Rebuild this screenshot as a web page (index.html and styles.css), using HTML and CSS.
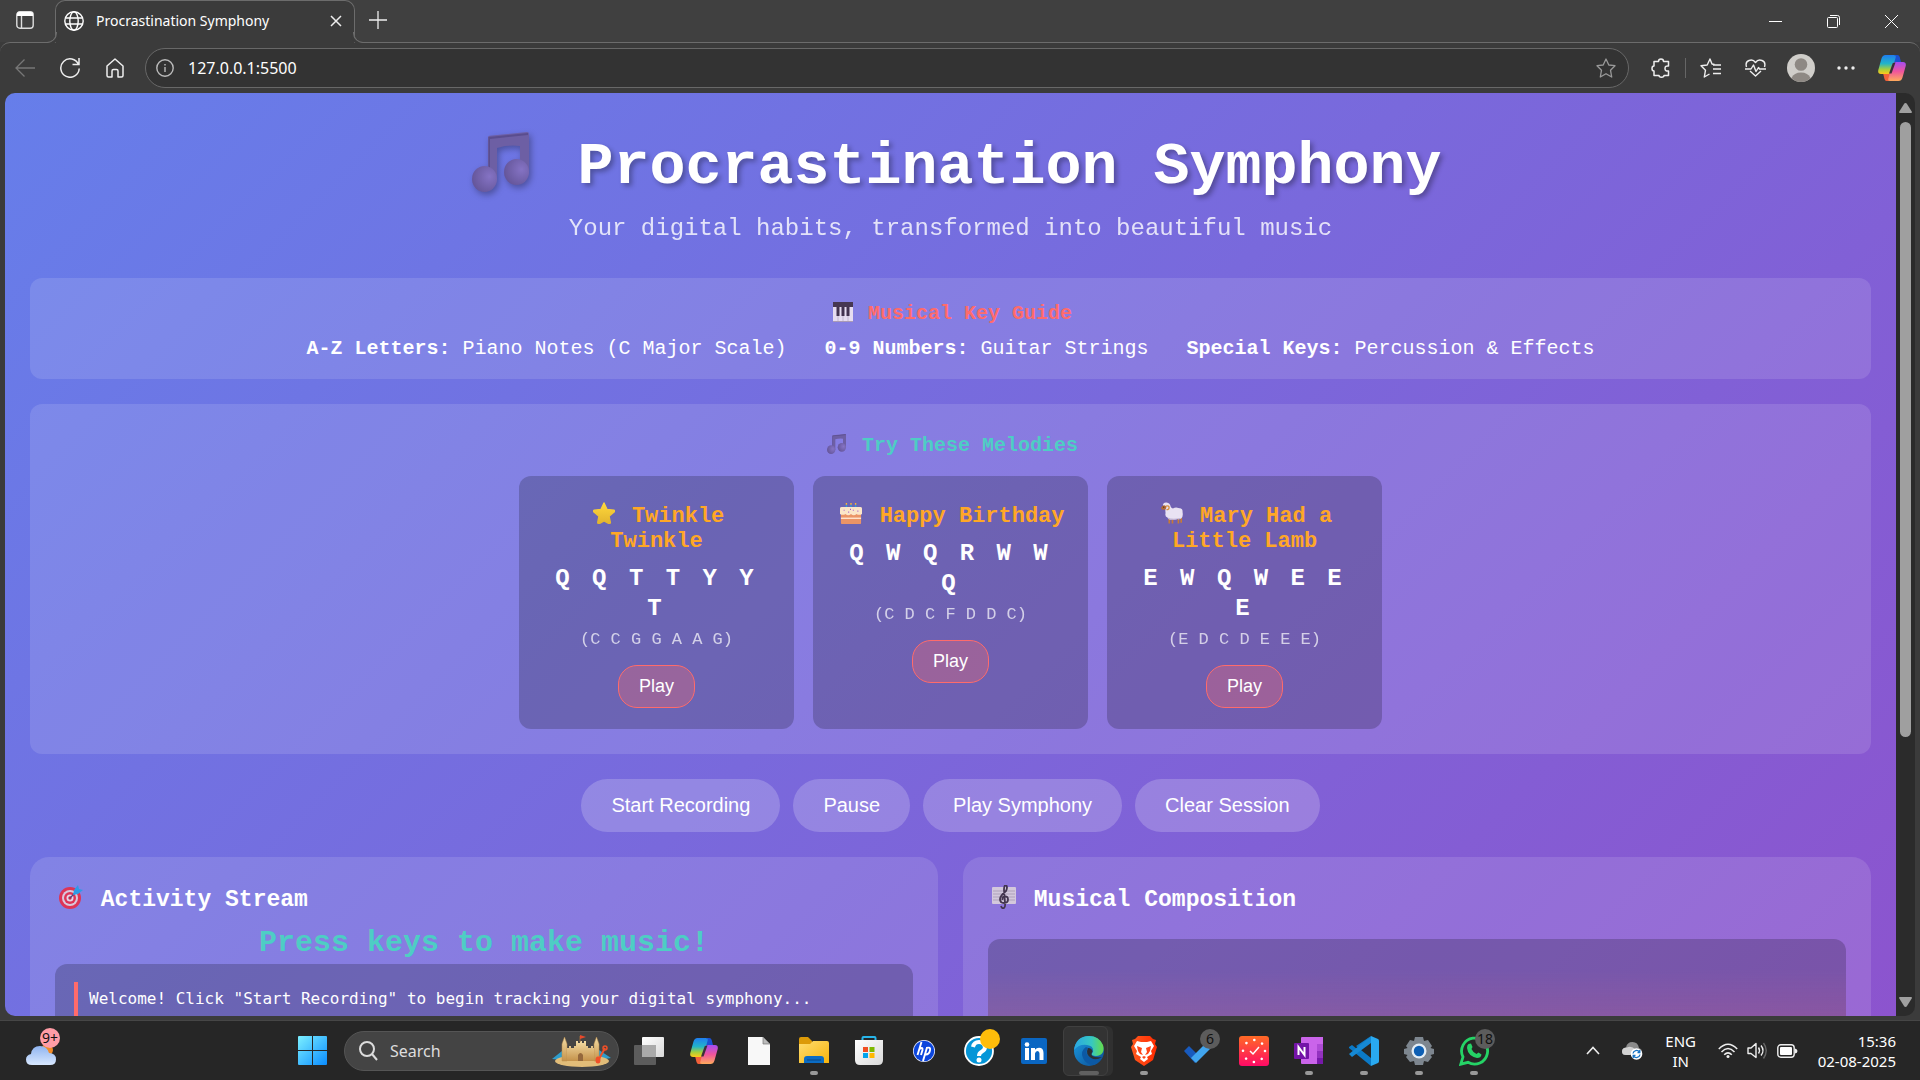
FILE: index.html
```html
<!DOCTYPE html>
<html lang="en">
<head>
<meta charset="utf-8">
<title>Procrastination Symphony</title>
<link rel="stylesheet" href="styles.css">
</head>
<body>
<svg class="sprite" aria-hidden="true">
  <defs>
    <radialGradient id="noteBall" cx=".7" cy=".4" r=".7"><stop offset="0" stop-color="#8573c4"/><stop offset="1" stop-color="#65569a"/></radialGradient>
    <linearGradient id="starFill" x2="0" y2="1"><stop offset="0" stop-color="#ffd83c"/><stop offset="1" stop-color="#e2b42e"/></linearGradient>
    <linearGradient id="cpA" x2="0" y2="1"><stop offset="0" stop-color="#1f7df0"/><stop offset=".45" stop-color="#22b4c8"/><stop offset=".75" stop-color="#a6cf3c"/><stop offset="1" stop-color="#ffc91a"/></linearGradient>
    <linearGradient id="cpB" x2="0" y2="1"><stop offset="0" stop-color="#a44cf2"/><stop offset=".5" stop-color="#f0559c"/><stop offset="1" stop-color="#ffab5c"/></linearGradient>
    <linearGradient id="winFill" x2="1" y2="1"><stop offset="0" stop-color="#7cf0ff"/><stop offset="1" stop-color="#0a8cff"/></linearGradient>
    <linearGradient id="cloudFill" x2="0" y2="1"><stop offset="0" stop-color="#8fb4f0"/><stop offset="1" stop-color="#d8e8ff"/></linearGradient>
    <linearGradient id="sand" x2="0" y2="1"><stop offset="0" stop-color="#f3dca4"/><stop offset="1" stop-color="#c4924a"/></linearGradient>
    <linearGradient id="folderFill" x2="1" y2="1"><stop offset="0" stop-color="#ffdd70"/><stop offset="1" stop-color="#f7b40c"/></linearGradient>
    <linearGradient id="edgeTop" x2="1"><stop offset="0" stop-color="#2aa6e4"/><stop offset=".6" stop-color="#37c8c0"/><stop offset="1" stop-color="#66dc48"/></linearGradient>
    <linearGradient id="edgeLow" x2="1" y2="1"><stop offset="0" stop-color="#1b9de2"/><stop offset="1" stop-color="#0c4a92"/></linearGradient>
    <linearGradient id="braveFill" x2="1"><stop offset="0" stop-color="#ff5a1f"/><stop offset="1" stop-color="#ff2a00"/></linearGradient>
    <linearGradient id="clockFill" x2="0" y2="1"><stop offset="0" stop-color="#ff6a25"/><stop offset="1" stop-color="#ff0a66"/></linearGradient>
    <linearGradient id="paperFill" x2="1" y2="1"><stop offset="0" stop-color="#fff"/><stop offset="1" stop-color="#d9d9d9"/></linearGradient>
  </defs>
  <symbol id="notes" viewBox="0 0 60 60">
    <path d="M16 5.500Q16 4 17.500 3.800L55 0Q57 0 57 2V42H48V14Q36 12.500 25 16V48H16Z" fill="#6d5fa4"/>
    <path d="M16.500 5L56 1V3L18 7V46H16.500Z" fill="#5a4d8e"/>
    <ellipse cx="12.500" cy="47" rx="12.500" ry="13" fill="url(#noteBall)"/>
    <ellipse cx="44.500" cy="40" rx="12.500" ry="13" fill="url(#noteBall)"/>
  </symbol>
  <symbol id="piano" viewBox="0 0 20 20">
    <path d="M0 0H20V20H0Z" fill="#e6dcf0"/><path d="M0 0H20V5H0Z" fill="#473752"/><path d="M3.500 5H6.500V14H3.500ZM8.500 5H11.500V14H8.500ZM13.500 5H16.500V14H13.500Z" fill="#42324e"/><path d="M5 14V19M10 14V19M15 14V19" stroke="#b9aec6" stroke-width=".8"/><path d="M0 19.500H20" stroke="#a99bb5"/>
  </symbol>
  <symbol id="star" viewBox="0 0 24 24">
    <path d="M12 1L15.200 8L23 9Q24 10 23 11L17.500 15.500L19 22.500Q18.500 24 17 23.300L12 20.500L7 23.500Q5 24 5.200 22L6.500 15.500L1 11Q0 9.500 1.500 9L8.800 8Z" fill="url(#starFill)" stroke="url(#starFill)" stroke-width="1.500" stroke-linejoin="round"/>
  </symbol>
  <symbol id="cake" viewBox="0 0 24 24">
    <path d="M7 3V7M12 3V7M17 3V7" stroke="#2f9ed8" stroke-width="1.500"/><path d="M7 1V3M12 1V3M17 1V3" stroke="#ffb52e" stroke-width="1.500"/>
    <rect x="1" y="12" width="22" height="12" rx="1" fill="#eb9466"/><path d="M1 17H23V18.500H1Z" fill="#ffe5cf"/>
    <path d="M0 7Q0 5.500 2 5.500H22Q24 5.500 24 7V13Q21 15 18 13Q15 16 12 13Q9 16 6 13Q3 15 0 13Z" fill="#fbe6c9"/>
    <path d="M4 9h1M9 11h1M14 9h1M19 10h1M11 8h1" stroke="#a250c8" stroke-width="1.300"/>
  </symbol>
  <symbol id="sheep" viewBox="0 0 24 24">
    <path d="M9 18V23.500M12.500 19V23.500M19 18V23.500M22 17V22.500" stroke="#c87a35" stroke-width="1.800"/>
    <path d="M2 3Q3 0 6 .5Q10 1 10.500 5Q11 7 13 7Q16 5.500 19 6.500Q24 6.500 23.500 11Q24.500 16 22 18Q20 19.500 18 18.500Q15 20 12 19Q8 20 7 17Q4 16 5 12Q4.500 9 5 7Z" fill="#e9e2f3"/>
    <path d="M7 17Q12 19.500 22 17.500Q20 19.500 18 18.500Q15 20 12 19Q8 20 7 17Z" fill="#bdaed0"/>
    <path d="M0 6.500Q1 3.500 4 3.500L6 5Q5.500 8.500 3.500 8.500L1 8.300Z" fill="#b46a34"/><path d="M5.500 4.500Q9 3.500 8.800 6.500Q8 9 6 8" fill="none" stroke="#d9913f" stroke-width="1.500"/><circle cx="3" cy="5.500" r=".7" fill="#222"/>
  </symbol>
  <symbol id="target" viewBox="0 0 24 24">
    <circle cx="11" cy="13" r="11" fill="#dd3556"/><circle cx="11" cy="13" r="8" fill="#d9c8dc"/><circle cx="11" cy="13" r="6" fill="#dd3556"/><circle cx="11" cy="13" r="3.500" fill="#e4d6e8"/><circle cx="11" cy="13" r="1.700" fill="#c82b4c"/>
    <path d="M11 13L19 5" stroke="#5a4080" stroke-width="1.300"/><path d="M14 10L15 5L19 0L20 4L24 5L19 9Z" fill="#2e9be6"/>
  </symbol>
  <symbol id="score" viewBox="0 0 24 24">
    <rect y="2" width="24" height="17" rx="1" fill="#d3c8dc"/><path d="M1 6H23M1 9H23M1 12H23M1 15H23" stroke="#a99db6" stroke-width=".9"/>
    <path d="M9 21Q10 24 12 23Q13.500 22 13 18L12 5Q12 0 14 0Q16 2 14 6Q8 11 8 14Q8 18 12 18Q16 18 16 14.500Q16 11 12.500 11.500Q10 12 10.500 15" fill="none" stroke="#43354e" stroke-width="1.800"/>
  </symbol>
  <symbol id="copilot" viewBox="0 0 28 26">
    <path d="M17 0H19.500Q21 0 21.700 2L23 7H17L14 10Z" fill="#1b50d0"/>
    <path d="M11 26H8.500Q7 26 6.500 24L5 18H11L14 15Z" fill="#f2603a"/>
    <path d="M7.500 0H16Q18.500 0 17.500 3L14 15.500Q13 19 10 19H3Q-.5 19 .3 15L3.500 3.500Q4.500 0 7.500 0Z" fill="url(#cpA)"/>
    <path d="M20.500 26H12Q9.500 26 10.500 23L14 10.500Q15 7 18 7H25Q28.500 7 27.700 11L24.500 22.500Q23.500 26 20.500 26Z" fill="url(#cpB)"/>
    <path d="M14.800 8L17.500 7.500L13.500 18.500H11Z" fill="#3b3038"/>
  </symbol>
</svg>

<header class="tabstrip">
  <button class="pane-btn" aria-label="Tab actions"><svg width="18" height="18" viewBox="0 0 18 18"><rect x=".8" y=".8" width="16.400" height="16.400" rx="3" fill="none" stroke="#ddd" stroke-width="1.400"/><path d="M1 2.500Q1 1 3 1H15Q17 1 17 2.500V5H1Z" fill="#fff"/><path d="M5.500 5V17" stroke="#ddd" stroke-width="1.400"/></svg></button>
  <div class="tab">
    <svg width="20" height="20" viewBox="0 0 20 20" fill="none" stroke="#fff" stroke-width="1.400"><circle cx="10" cy="10" r="9.200"/><ellipse cx="10" cy="10" rx="4.200" ry="9.200"/><path d="M1.500 7H18.500M1.500 13H18.500"/></svg>
    <span class="tab-title">Procrastination Symphony</span>
    <button class="tab-close" aria-label="Close tab"><svg width="12" height="12" viewBox="0 0 12 12" stroke="#eee" stroke-width="1.500"><path d="M1 1L11 11M11 1L1 11"/></svg></button>
  </div>
  <button class="new-tab" aria-label="New tab"><svg width="18" height="18" viewBox="0 0 18 18" stroke="#eee" stroke-width="1.300"><path d="M9 0V18M0 9H18"/></svg></button>
  <div class="window-btns">
    <button aria-label="Minimize"><svg width="13" height="13" viewBox="0 0 13 13"><path d="M0 6.500H13" stroke="#fff"/></svg></button>
    <button aria-label="Restore"><svg width="13" height="13" viewBox="0 0 13 13" fill="none" stroke="#fff"><rect x=".5" y="2.500" width="10" height="10" rx="1"/><path d="M3 .5H10.500Q12.500.5 12.500 2.500V10"/></svg></button>
    <button aria-label="Close"><svg width="13" height="13" viewBox="0 0 13 13" stroke="#fff"><path d="M0 0L13 13M13 0L0 13"/></svg></button>
  </div>
</header>

<nav class="toolbar">
  <button class="tool" aria-label="Back"><svg width="20" height="20" viewBox="0 0 20 20" fill="none" stroke="#777" stroke-width="1.300"><path d="M20 10H1M9.500 1.500L1 10L9.500 18.500"/></svg></button>
  <button class="tool" aria-label="Refresh"><svg width="20" height="20" viewBox="0 0 20 20" fill="none" stroke="#eee" stroke-width="1.500"><path d="M18.500 6.500A9.200 9.200 0 1 0 19.200 10.500M19 0V6.500H12.500"/></svg></button>
  <button class="tool" aria-label="Home"><svg width="18" height="20" viewBox="0 0 18 20" fill="none" stroke="#eee" stroke-width="1.500" stroke-linejoin="round"><path d="M1 8L9 1L17 8V17.500Q17 19 15.500 19H12V13Q12 11.500 10.500 11.500H7.500Q6 11.500 6 13V19H2.500Q1 19 1 17.500Z"/></svg></button>
  <div class="address">
    <svg width="18" height="18" viewBox="0 0 18 18" fill="none" stroke="#bbb" stroke-width="1.400"><circle cx="9" cy="9" r="8.200"/><path d="M9 8V13M9 5V6.500"/></svg>
    <input type="text" value="127.0.0.1:5500" aria-label="Address">
    <svg width="20" height="20" viewBox="0 0 20 20" fill="none" stroke="#999" stroke-width="1.300" stroke-linejoin="round"><path d="M10 1L12.800 7L19 7.700L14.500 12.200L15.700 19L10 15.700L4.300 19L5.500 12.200L1 7.700L7.200 7Z"/></svg>
  </div>
  <button class="tool" aria-label="Extensions"><svg width="20" height="20" viewBox="0 0 20 20" fill="none" stroke="#eee" stroke-width="1.500" stroke-linejoin="round"><path d="M3 3.500H7.500Q7.500 1 10 1T12.500 3.500H17.500V8Q14 7.500 14 10.500T17.500 13V17.500H13Q13 19.200 10.500 19.200T8 17.500H3V13Q1 13 1 10.500T3 8Z"/></svg></button>
  <span class="divider"></span>
  <button class="tool" aria-label="Favorites"><svg width="21" height="20" viewBox="0 0 21 20" fill="none" stroke="#eee" stroke-width="1.400" stroke-linejoin="round"><path d="M14.500 6.500L12 6L10 1L7.200 7L1 7.700L5.500 12.200L4.300 19L9.500 16M13 7H21M13 11H21M13 15.500H21"/></svg></button>
  <button class="tool" aria-label="Browser essentials"><svg width="21" height="18" viewBox="0 0 21 18" fill="none" stroke="#eee" stroke-width="1.400" stroke-linejoin="round"><path d="M1.500 8Q0 3 4 1.500Q8 0 10.500 3.500Q13 0 17 1.500Q21 3 19.500 8M5 12L10.500 17L16 12M0 10H6L8.500 6L11 12.500L13.500 8.500L14.500 10H21"/></svg></button>
  <button class="tool" aria-label="Profile"><svg width="28" height="28" viewBox="0 0 28 28"><circle cx="14" cy="14" r="14" fill="#d0ceca"/><circle cx="14" cy="10.500" r="6.300" fill="#8e8984"/><path d="M4.500 24Q7 18.500 14 18.500T23.500 24Q20 28 14 28T4.500 24Z" fill="#8e8984"/></svg></button>
  <button class="tool" aria-label="More"><svg width="18" height="4" viewBox="0 0 18 4" fill="#eee"><circle cx="2" cy="2" r="1.700"/><circle cx="9" cy="2" r="1.700"/><circle cx="16" cy="2" r="1.700"/></svg></button>
  <button class="tool tool-wide" aria-label="Copilot"><svg width="28" height="26"><use href="#copilot"/></svg></button>
</nav>

<div class="frame">
  <main class="page">
    <header class="hero">
      <h1><svg class="emoji emoji-xl"><use href="#notes"/></svg> Procrastination Symphony</h1>
      <p>Your digital habits, transformed into beautiful music</p>
    </header>

    <section class="guide">
      <h2 class="guide-title"><svg class="emoji emoji-sm"><use href="#piano"/></svg> Musical Key Guide</h2>
      <div class="guide-items">
        <span><strong>A-Z Letters:</strong> Piano Notes (C Major Scale)</span>
        <span><strong>0-9 Numbers:</strong> Guitar Strings</span>
        <span><strong>Special Keys:</strong> Percussion &amp; Effects</span>
      </div>
    </section>

    <section class="melodies">
      <h2 class="melodies-title"><svg class="emoji emoji-sm"><use href="#notes"/></svg> Try These Melodies</h2>
      <div class="cards">
        <article class="card">
          <h3><svg class="emoji emoji-md"><use href="#star"/></svg> Twinkle Twinkle</h3>
          <p class="keys">Q Q T T Y Y T</p>
          <p class="pitches">(C C G G A A G)</p>
          <button class="play">Play</button>
        </article>
        <article class="card">
          <h3><svg class="emoji emoji-md"><use href="#cake"/></svg> Happy Birthday</h3>
          <p class="keys">Q W Q R W W Q</p>
          <p class="pitches">(C D C F D D C)</p>
          <button class="play">Play</button>
        </article>
        <article class="card">
          <h3><svg class="emoji emoji-md"><use href="#sheep"/></svg> Mary Had a Little Lamb</h3>
          <p class="keys">E W Q W E E E</p>
          <p class="pitches">(E D C D E E E)</p>
          <button class="play">Play</button>
        </article>
      </div>
    </section>

    <div class="controls">
      <button>Start Recording</button>
      <button>Pause</button>
      <button>Play Symphony</button>
      <button>Clear Session</button>
    </div>

    <div class="panels">
      <section class="panel">
        <h2><svg class="emoji emoji-lg"><use href="#target"/></svg> Activity Stream</h2>
        <p class="status">Press keys to make music!</p>
        <div class="stream"><p>Welcome! Click "Start Recording" to begin tracking your digital symphony...</p></div>
      </section>
      <section class="panel">
        <h2><svg class="emoji emoji-lg"><use href="#score"/></svg> Musical Composition</h2>
        <div class="composition"></div>
      </section>
    </div>
  </main>
  <div class="scrollbar">
    <svg width="13" height="10" viewBox="0 0 13 10"><path d="M6.500 0Q7.500 0 8 1L13 9Q13 10 12 10H1Q0 10 0 9L5 1Q5.500 0 6.500 0Z" fill="#a0a0a0"/></svg>
    <div class="track"><div class="thumb"></div></div>
    <svg width="13" height="10" viewBox="0 0 13 10"><path d="M6.500 10Q7.500 10 8 9L13 1Q13 0 12 0H1Q0 0 0 1L5 9Q5.500 10 6.500 10Z" fill="#a0a0a0"/></svg>
  </div>
</div>

<footer class="taskbar">
  <div class="widgets">
    <button class="widget" aria-label="Weather">
      <svg width="30" height="30" viewBox="0 0 30 30"><circle cx="21" cy="14" r="6" fill="#f08a28"/><path d="M6 29Q0 29 0 23.500Q0 19 5 18Q6 10 14 10Q21 10 23 17Q30 17 30 23.500Q30 29 24 29Z" fill="url(#cloudFill)"/></svg>
      <span class="badge badge-pink">9+</span>
    </button>
  </div>
  <div class="apps">
    <button class="app" aria-label="Start"><svg width="29" height="29" viewBox="0 0 29 29" fill="url(#winFill)"><path d="M0 1Q0 0 1 0H14V14H0ZM15 0H28Q29 0 29 1V14H15ZM0 15H14V29H1Q0 29 0 28ZM15 15H29V28Q29 29 28 29H15Z"/></svg></button>
    <label class="search">
      <svg width="19" height="20" viewBox="0 0 19 20" fill="none" stroke="#ddd" stroke-width="2"><circle cx="8" cy="8" r="7"/><path d="M13 13L18 19"/></svg>
      <input type="text" placeholder="Search" aria-label="Search">
      <svg width="59" height="32" viewBox="0 0 59 32"><path d="M0 24L10 16L18 26ZM59 23L47 15L42 26Z" fill="#2e9ccc"/><ellipse cx="30" cy="26" rx="27" ry="6" fill="#e2bd79"/><path d="M10 9L12.500 2L15 9V26H10ZM42 9L44.500 2L47 9V26H42Z" fill="url(#sand)" stroke="#b88c4c" stroke-width=".5"/><path d="M15 13H17V11H19V13H22V11H24V6H26V8H28V6H30V8H32V6H34V11H36V13H39V11H41V13H42V26H15Z" fill="url(#sand)"/><path d="M26 26V20Q28.500 16 31 20V26Z" fill="#94683c"/><path d="M28 7V1" stroke="#94683c"/><path d="M28 0L34 2L28 4Z" fill="#e8482a"/><path d="M53 13L47 24" stroke="#f05028" stroke-width="2"/><ellipse cx="46" cy="25" rx="2.500" ry="3.500" fill="#f05028"/><circle cx="53" cy="13" r="2" fill="none" stroke="#f05028" stroke-width="1.500"/></svg>
    </label>
    <button class="app" aria-label="Task view"><svg width="30" height="28" viewBox="0 0 30 28"><rect x="8" width="22" height="20" rx="1" fill="url(#paperFill)"/><rect y="8" width="22" height="20" rx="1" fill="#666" fill-opacity=".85"/><path d="M8 8H22V20H8Z" fill="#aaa"/></svg></button>
    <button class="app" aria-label="Copilot"><svg width="28" height="26"><use href="#copilot"/></svg></button>
    <button class="app" aria-label="Document"><svg width="22" height="28" viewBox="0 0 22 28"><path d="M0 0H15L22 7V28H0Z" fill="#f8f8f8"/><path d="M15 0V7H22Z" fill="#bbb" stroke="#777" stroke-width=".7"/></svg></button>
    <button class="app running" aria-label="File Explorer"><svg width="30" height="27" viewBox="0 0 30 27"><path d="M0 2Q0 0 2 0H9L13 4V8H0Z" fill="#dc9a08"/><path d="M0 7H11L14 4H28Q30 4 30 6V26H0Z" fill="url(#folderFill)"/><path d="M5 26V22Q5 19 8 19H22Q25 19 25 22V26Z" fill="#0b6cc4"/><path d="M8 23H22" stroke="#0a4684"/></svg></button>
    <button class="app" aria-label="Store"><svg width="30" height="29" viewBox="0 0 30 29"><path d="M8.500 6V2Q8.500 1 9.500 1H20.500Q21.500 1 21.500 2V6" fill="none" stroke="#27b5ea" stroke-width="2"/><path d="M1 4H29V24Q29 29 24 29H6Q1 29 1 24Z" fill="url(#paperFill)"/><path d="M9 11H14V16H9Z" fill="#f04e23"/><path d="M15.500 11H20.500V16H15.500Z" fill="#7db900"/><path d="M9 17H14V22H9Z" fill="#00a3ee"/><path d="M15.500 17H20.500V22H15.500Z" fill="#ffb800"/></svg></button>
    <button class="app" aria-label="HP"><svg width="22" height="22" viewBox="0 0 22 22"><circle cx="11" cy="11" r="11" fill="#e8ecff"/><circle cx="11" cy="11" r="10.300" fill="#0b45dc"/><path d="M8.500 2L4.500 15M6.500 9Q10 6.500 9.500 10L8 15M14 7.500L10 21M13.500 8Q18 6.500 17 10.500Q16 15 12 14.500" fill="none" stroke="#fff" stroke-width="1.900"/></svg></button>
    <button class="app" aria-label="Help"><svg width="30" height="30" viewBox="0 0 30 30"><circle cx="15" cy="15" r="14" fill="#0596d8" stroke="#fff" stroke-width="1.800"/><path d="M9 11Q10 6 15 6T21 11Q21 14 18 15.500Q15 17 15 20" fill="none" stroke="#fff" stroke-width="4"/><circle cx="15" cy="24" r="2.500" fill="#fff"/></svg><span class="badge badge-yellow"></span></button>
    <button class="app" aria-label="LinkedIn"><svg width="26" height="26" viewBox="0 0 26 26"><rect width="26" height="26" rx="2" fill="#0a66c2"/><circle cx="6" cy="6.500" r="2.300" fill="#fff"/><path d="M4 10H8V22H4ZM10 10H14V11.700Q15.500 9.700 18 9.700Q22.500 9.700 22.500 15V22H18.500V15.500Q18.500 13 16.500 13T14 15.500V22H10Z" fill="#fff"/></svg></button>
    <button class="app active" aria-label="Edge"><svg width="30" height="30" viewBox="0 0 30 30"><circle cx="15" cy="15" r="15" fill="url(#edgeLow)"/><path d="M0 14Q2 0 15 0Q25 0 29 9Q31 16 26 19Q22 21 18 19Q17 18 19 16Q20 10 13 9Q5 8 0 14Z" fill="url(#edgeTop)"/><path d="M12 11Q6 15 9 22Q12 29 20 29Q25 27 28 22Q22 25 17 22Q10 18 14 12Z" fill="#0c59a4"/><path d="M14 12Q11 18 17 22Q22 25 28 21Q22 22 18.500 20Q16.500 18.500 18.500 15.500Q18 12 14 12Z" fill="#2d2f33"/></svg></button>
    <button class="app running" aria-label="Brave"><svg width="26" height="30" viewBox="0 0 26 30"><path d="M7 0H19L22 3L25 4L24 8L26 11L22 24L13 30L4 24L0 11L2 8L1 4L4 3Z" fill="url(#braveFill)"/><path d="M6 5L10 6H16L20 5L23 10L20 15L21 18L16 21L17 23L13 26L9 23L10 21L5 18L6 15L3 10Z" fill="#fff"/><path d="M6 10L11 12L10 16L12 19L9 18L7 15ZM20 10L15 12L16 16L14 19L17 18L19 15ZM11 21L13 20L15 21L13 23Z" fill="#ff4518"/></svg></button>
    <button class="app" aria-label="To Do"><svg width="30" height="26" viewBox="0 0 30 26"><path d="M0 13L5 8L16 19L11 25Z" fill="#185abd"/><path d="M7 20L24 3L29 8L12 25Z" fill="#41a5ee"/></svg><span class="badge badge-grey">6</span></button>
    <button class="app" aria-label="Clock"><svg width="30" height="30" viewBox="0 0 30 30"><rect width="30" height="30" rx="3" fill="url(#clockFill)"/><path d="M11 15L14 18L20 11" fill="none" stroke="#fff" stroke-width="1.500"/><circle cx="15" cy="15" r="11" fill="none" stroke="#fff" stroke-width="2.600" stroke-linecap="round" stroke-dasharray=".01 8.630"/></svg></button>
    <button class="app running" aria-label="OneNote"><svg width="30" height="28" viewBox="0 0 30 28"><path d="M7 1Q7 0 8 0H29V27H8Q7 27 7 26Z" fill="#ca64ea"/><path d="M23 7H29V14H23Z" fill="#ae4bd5"/><path d="M23 14H29V21H23Z" fill="#9332bf"/><path d="M23 21H29V27H23Z" fill="#7719aa"/><rect y="6" width="15" height="16" rx="1" fill="#7414a8"/><path d="M4.500 18V10L10.500 18V10" fill="none" stroke="#fff" stroke-width="2"/></svg></button>
    <button class="app running" aria-label="Visual Studio Code"><svg width="30" height="30" viewBox="0 0 30 30"><path d="M22 0L8 13L3 9L0 11V12L22 30V22L7 10Z" fill="#0b79c6"/><path d="M0 18L3 21L22 7V0L0 18Z" fill="#1689d4"/><path d="M22 0L29 3Q30 3.500 30 5V25Q30 26.500 29 27L22 30Z" fill="#29a9f0"/></svg></button>
    <button class="app running" aria-label="Settings"><svg width="30" height="28" viewBox="0 0 30 28"><path d="M11 0H19L20 4L24 3L28 9L26.500 11L30 12V17L26.500 18L28 20L24 25L20 24L19 28H11L10 24L6 25L2 20L3.500 18L0 17V12L3.500 11L2 9L6 3L10 4Z" fill="#7d868f"/><circle cx="15" cy="14" r="7.500" fill="#e3edf5"/><circle cx="15" cy="14" r="5.200" fill="#0d5fb4"/></svg></button>
    <button class="app running" aria-label="WhatsApp"><svg width="30" height="30" viewBox="0 0 30 30"><path d="M1.800 28.200L4 21A13 13 0 1 1 9 26.300Z" fill="none" stroke="#25d366" stroke-width="2.800"/><path d="M9.500 8L12 7.500L13.500 11L12.500 13Q14 16.500 17.500 18L19.500 16.500L22.500 18.500Q22 22 18 22Q9 20 8 12Q8 9 9.500 8Z" fill="#25d366"/></svg><span class="badge badge-grey">18</span></button>
  </div>
  <div class="tray">
    <button class="tray-btn" aria-label="Hidden icons"><svg width="14" height="9" viewBox="0 0 14 9" fill="none" stroke="#eee" stroke-width="1.600"><path d="M1 8L7 1.500L13 8"/></svg></button>
    <button class="tray-btn" aria-label="OneDrive"><svg width="21" height="18" viewBox="0 0 21 18"><path d="M4 13Q0 13 0 9.500Q0 6 4 5.500Q5 0 10.500 0Q16 0 17 6Q20 7 20 10T17 13Z" fill="#8b8b8b"/><path d="M4 13Q0 13 0 9.500Q0 5.500 5 5.500Q9 3 14 8L8 13Z" fill="#d2d2d2"/><circle cx="14.500" cy="12" r="5.800" fill="#fff"/><path d="M11 11.500A3.600 3.600 0 0 1 17.500 10M18 12.500A3.600 3.600 0 0 1 11.500 14M17.800 8V10.500H15.500M11.200 16V13.500H13.500" fill="none" stroke="#1673c4" stroke-width="1.300"/></svg></button>
    <span class="lang">ENG<br>IN</span>
    <div class="system">
      <svg width="20" height="16" viewBox="0 0 20 16" fill="none" stroke="#eee" stroke-width="1.500"><path d="M.8 6Q10-3.500 19.200 6M3.500 9Q10 2.200 16.500 9M6.200 11.800Q10 8 13.800 11.800"/><circle cx="10" cy="13.500" r="1.500" fill="#eee" stroke="none"/></svg>
      <svg width="21" height="18" viewBox="0 0 21 18" fill="none" stroke="#eee" stroke-width="1.400" stroke-linejoin="round"><path d="M1 6H4L9 1.500V15.500L4 11.500H1ZM11.500 5.500Q13.500 8.500 11.500 11.500M14 3.500Q18 8.500 14 13.500"/><path d="M16.500 1Q22 8.500 16.500 16.500" stroke="#666"/></svg>
      <svg width="21" height="14" viewBox="0 0 21 14"><rect x=".8" y=".8" width="16.400" height="12.400" rx="3" fill="none" stroke="#eee" stroke-width="1.400"/><rect x="3" y="3" width="12" height="8" rx="1" fill="#fff"/><path d="M18 4.500Q20.500 5 20.500 7T18 9.500Z" fill="#eee"/></svg>
    </div>
    <span class="clock">15:36<br>02-08-2025</span>
  </div>
</footer>
</body>
</html>
```
FILE: styles.css
```css
* { box-sizing: border-box; }

body {
  margin: 0;
  height: 100vh;
  display: flex;
  flex-direction: column;
  overflow: hidden;
  background: #3b3b3b;
  color: #fff;
  font-family: "Noto Sans", "Open Sans", sans-serif;
}

h1, h2, h3, p { margin: 0; }
button { border: 0; background: none; color: inherit; padding: 0; }
svg { display: block; flex: none; }
.sprite { position: absolute; width: 0; height: 0; }

/* Browser tab strip */
.tabstrip { display: flex; height: 42px; background: #404040; flex: none; }
.pane-btn, .new-tab, .tab-close, .tool, .tray-btn, .window-btns button {
  display: flex; align-items: center; justify-content: center;
}
.pane-btn { width: 50px; height: 40px; }
.tab {
  position: relative;
  display: flex;
  align-items: center;
  width: 300px;
  height: 43px;
  margin-left: 5px;
  padding: 0 8px 3px;
  background: #3b3b3b;
  border: 1px solid #6c6c6c;
  border-bottom: 0;
  border-radius: 10px 10px 0 0;
  z-index: 1;
}
.tab::before, .tab::after {
  content: "";
  position: absolute;
  bottom: 0;
  width: 10px;
  height: 10px;
  border-bottom: 1px solid #6c6c6c;
}
.tab::before { left: -10px; border-right: 1px solid #6c6c6c; border-bottom-right-radius: 10px; box-shadow: 2px 2px 0 #3b3b3b; }
.tab::after { right: -10px; border-left: 1px solid #6c6c6c; border-bottom-left-radius: 10px; box-shadow: -2px 2px 0 #3b3b3b; }
.tab-title { flex: 1; margin-left: 12px; font-size: 14px; line-height: 20px; }
.tab-close { width: 20px; height: 20px; }
.new-tab { width: 45px; height: 39px; }
.window-btns { display: flex; margin-left: auto; }
.window-btns button { width: 58px; height: 42px; }

/* Browser toolbar */
.toolbar {
  display: flex;
  align-items: center;
  height: 51px;
  flex: none;
  padding: 0 4px 0 2px;
  border-top: 1px solid #6c6c6c;
  border-radius: 10px 10px 0 0;
}
.tool { width: 45px; height: 40px; flex: none; }
.tool-wide { width: 48px; }
.address {
  flex: 1;
  display: flex;
  align-items: center;
  height: 40px;
  margin: 0 9px 0 8px;
  padding: 0 12px 0 10px;
  background: #333;
  border: 1px solid #686868;
  border-radius: 20px;
}
.address input {
  flex: 1;
  margin: 0 14px;
  padding: 0;
  border: 0;
  background: none;
  color: #fff;
  font: 16px/22px "Noto Sans", sans-serif;
}
.divider { width: 1px; height: 20px; margin: 0 2px; background: #666; }

/* Web page area */
.frame {
  flex: 1;
  min-height: 0;
  display: flex;
  margin: 0 5px 4px;
  border-radius: 10px;
  overflow: hidden;
}
.page {
  flex: 1;
  min-width: 0;
  padding: 25px;
  overflow: hidden;
  background: linear-gradient(135deg, #667eea, #8c54ce);
  font-family: "Courier New", "Liberation Mono", monospace;
}
.scrollbar {
  display: flex;
  flex-direction: column;
  align-items: center;
  width: 19px;
  padding: 10px 0 9px;
  background: #2b2b2b;
}
.track { flex: 1; padding: 9px 0; }
.thumb { width: 11px; height: 71%; border-radius: 6px; background: #9f9f9f; }

.emoji { display: inline-block; }
.emoji-xl { width: 60px; height: 60px; margin: 0 9px 0 13px; vertical-align: -9px; filter: drop-shadow(2px 3px 3px rgba(0, 0, 0, .3)); }
.emoji-lg { width: 24px; height: 24px; margin: 0 4px; vertical-align: -3px; }
.emoji-md { width: 22px; height: 22px; margin: 0 4px; vertical-align: -2px; }
.emoji-sm { width: 20px; height: 20px; margin: 0 3px 0 4px; vertical-align: -3px; }

.hero { text-align: center; margin-bottom: 36px; }
.hero h1 { font-size: 60px; line-height: 98px; text-shadow: 3px 3px 5px rgba(0, 0, 0, .3); }
.hero p { font-size: 24px; line-height: 26px; opacity: .8; }

.guide, .melodies { background: rgba(255, 255, 255, .12); border-radius: 12px; text-align: center; margin-bottom: 25px; }
.guide { padding: 20px 19px 18px; }
.guide-title { font-size: 20px; line-height: 32px; margin-bottom: 6px; color: #ff6b6b; }
.guide-items { display: flex; flex-wrap: wrap; justify-content: center; column-gap: 38px; font-size: 20px; line-height: 25px; }

.melodies { padding: 25px; }
.melodies-title { font-size: 20px; line-height: 34px; margin-bottom: 13px; color: #4ecdc4; }
.cards { display: flex; flex-wrap: wrap; justify-content: center; gap: 19px; }
.card { width: 275px; padding: 26px 22px 21px; background: rgba(0, 0, 0, .2); border-radius: 12px; }
.card h3 { font-size: 22px; line-height: 25px; margin-bottom: 10px; color: #ffa726; }
.keys { font-size: 24px; font-weight: bold; line-height: 30px; letter-spacing: 4px; margin-bottom: 6px; }
.pitches { font-size: 17px; line-height: 20px; margin-bottom: 15px; opacity: .7; }
.play {
  height: 43px;
  padding: 0 20px;
  border: 1px solid #ff6b6b;
  border-radius: 19px;
  background: rgba(255, 107, 107, .3);
  font: 18px "Liberation Sans", Arial, sans-serif;
}

.controls { display: flex; flex-wrap: wrap; justify-content: center; gap: 13px; margin-bottom: 25px; }
.controls button {
  height: 53px;
  padding: 0 30px;
  border-radius: 27px;
  background: rgba(255, 255, 255, .2);
  font: 20px "Liberation Sans", Arial, sans-serif;
}

.panels { display: grid; grid-template-columns: 1fr 1fr; gap: 25px; }
.panel { padding: 25px; background: rgba(255, 255, 255, .12); border-radius: 19px; }
.panel h2 { font-size: 23px; line-height: 36px; }
.status { margin: 8px 0 4px; font-size: 30px; font-weight: bold; line-height: 34px; text-align: center; color: #4ecdc4; }
.stream { min-height: 375px; padding: 18px 19px; border-radius: 12px; background: rgba(0, 0, 0, .2); }
.stream p { padding: 8px 11px; border-left: 4px solid #ff6b6b; font: 16px/18px "DejaVu Sans Mono", monospace; }
.composition {
  height: 250px;
  margin-top: 21px;
  border-radius: 12px;
  background: linear-gradient(to bottom, transparent 30px, rgba(255, 107, 107, .4) 190px), rgba(0, 0, 0, .2);
}

/* Taskbar */
.taskbar {
  display: flex;
  align-items: center;
  height: 60px;
  flex: none;
  background: #262626;
  border-top: 1px solid #464646;
}
.widgets { width: 285px; padding-left: 26px; }
.widget { position: relative; width: 30px; height: 30px; display: block; }
.badge {
  position: absolute;
  top: -8px;
  right: -4px;
  width: 20px;
  height: 20px;
  border-radius: 50%;
  font: 14px/20px "Noto Sans", sans-serif;
  text-align: center;
  color: #111;
}
.app .badge { top: 3px; right: 6px; }
.badge-pink { background: #ff9ca6; }
.badge-yellow { background: #ffbd0a; }
.badge-grey { background: #5c5c5c; }
.apps { display: flex; align-items: center; }
.app { position: relative; display: flex; align-items: center; justify-content: center; width: 55px; height: 50px; }
.app.active::before {
  content: "";
  position: absolute;
  inset: 0 8px 0 2px;
  z-index: -1;
  border: 1px solid #404040;
  border-radius: 6px;
  background: #333;
  box-shadow: 5px 0 0 #303030;
}
.app.active { z-index: 0; }
.running::after, .active::after {
  content: "";
  position: absolute;
  bottom: 1px;
  left: 24px;
  width: 8px;
  height: 4px;
  border-radius: 2px;
  background: #999;
}
.active::after { left: 18px; width: 20px; background: #606060; }
.search {
  display: flex;
  align-items: center;
  width: 275px;
  height: 40px;
  margin: 0 2px 0 4px;
  padding: 0 7px 0 14px;
  border: 1px solid #555;
  border-radius: 20px;
  background: #444;
}
.search input { flex: 1; min-width: 0; margin: 0 12px; padding: 0; border: 0; background: none; font: 16px/22px "Noto Sans", sans-serif; color: #ddd; }
.search input::placeholder { color: #ddd; opacity: 1; }
.tray { display: flex; align-items: center; margin-left: auto; padding-right: 24px; font-size: 15px; line-height: 20px; }
.tray-btn { width: 40px; height: 40px; }
.lang { width: 56px; text-align: center; }
.system { display: flex; align-items: center; gap: 9px; margin: 0 20px 0 9px; }
.clock { text-align: right; }
```
